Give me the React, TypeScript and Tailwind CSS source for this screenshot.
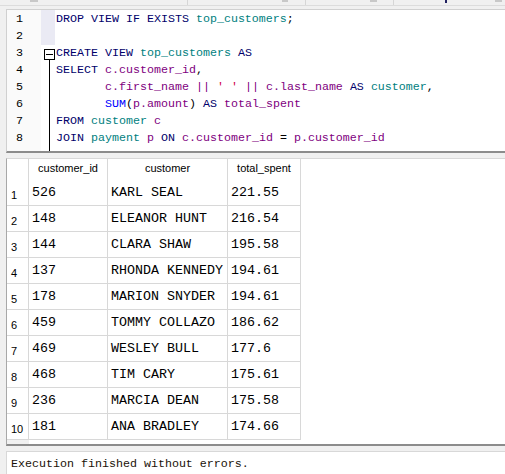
const rows = [
  ["526", "KARL SEAL", "221.55"],
  ["148", "ELEANOR HUNT", "216.54"],
  ["144", "CLARA SHAW", "195.58"],
  ["137", "RHONDA KENNEDY", "194.61"],
  ["178", "MARION SNYDER", "194.61"],
  ["459", "TOMMY COLLAZO", "186.62"],
  ["469", "WESLEY BULL", "177.6"],
  ["468", "TIM CARY", "175.61"],
  ["236", "MARCIA DEAN", "175.58"],
  ["181", "ANA BRADLEY", "174.66"],
];

const mono = { fontFamily: '"Liberation Mono", "Courier New", monospace' };

function Kw({ children }: { children: React.ReactNode }) {
  return <span className="text-[#00006a]">{children}</span>;
}
function Tbl({ children }: { children: React.ReactNode }) {
  return <span className="text-[#008080]">{children}</span>;
}
function Id({ children }: { children: React.ReactNode }) {
  return <span className="text-[#800080]">{children}</span>;
}

export default function App() {
  return (
    <div className="w-[505px] h-[474px] bg-[#f0f0f0] overflow-hidden flex flex-col">
      {/* scrolled-off strip above the editor */}
      <div className="h-[6px] flex border-b border-[#dcdcdc] shrink-0">
        <div className="w-[188px] border-r border-[#d6d6d6] flex">
          <div className="ml-[30px] w-[8px] h-[2px] bg-[#c8c8c8]" />
        </div>
        <div className="w-[118px] border-r border-[#d6d6d6] flex">
          <div className="ml-[94px] w-[6px] h-[2px] bg-[#c8c8c8]" />
        </div>
        <div className="w-[88px] border-r border-[#d6d6d6] flex">
          <div className="ml-[64px] w-[7px] h-[2px] bg-[#c8c8c8]" />
        </div>
        <div className="flex-1 flex">
          <div className="ml-[51px] w-[2px] h-[3px] bg-[#202060]" />
          <div className="ml-[48px] w-[7px] h-[2px] bg-[#c8c8c8]" />
        </div>
      </div>

      {/* SQL editor */}
      <div className="mt-[3px] ml-[6px] h-[144px] shrink-0 bg-white border-l border-t border-[#d0d0d0] border-b-2 border-b-[#8c8c8c] flex">
        <div
          className="w-[34px] bg-[#fafafa] pt-[1px] text-[11.67px] leading-[17px] text-black"
          style={mono}
        >
          {[1, 2, 3, 4, 5, 6, 7, 8].map((n) => (
            <div key={n} className="pl-[9px]">{n}</div>
          ))}
        </div>
        <div className="w-[14px] flex flex-col">
          <div className="h-[35px] bg-[#eaeaf4]" />
          <div className="ml-[3px] mt-[4px] w-[11px] h-[11px] border border-black bg-white flex items-center justify-center">
            <div className="w-[7px] h-px bg-black" />
          </div>
          <div className="ml-[8px] w-px flex-1 bg-black" />
        </div>
        <div
          className="flex-1 pl-px pt-[1px] text-[11.67px] leading-[17px] text-black whitespace-pre"
          style={mono}
        >
          <div><Kw>DROP VIEW IF EXISTS</Kw> <Tbl>top_customers</Tbl>;</div>
          <div>&nbsp;</div>
          <div><Kw>CREATE VIEW</Kw> <Tbl>top_customers</Tbl> <Kw>AS</Kw></div>
          <div><Kw>SELECT</Kw> <Id>c.customer_id</Id>,</div>
          <div>
            {"       "}<Id>c.first_name</Id> <Id>||</Id> <span className="text-[#d0004a]">' '</span> <Id>||</Id> <Id>c.last_name</Id> <Kw>AS</Kw> <Tbl>customer</Tbl>,
          </div>
          <div>
            {"       "}<span className="text-[#0000ff]">SUM</span>(<Id>p.amount</Id>) <Kw>AS</Kw> <Id>total_spent</Id>
          </div>
          <div><Kw>FROM</Kw> <Tbl>customer</Tbl> <Id>c</Id></div>
          <div><Kw>JOIN</Kw> <Tbl>payment</Tbl> <Id>p</Id> <Kw>ON</Kw> <Id>c.customer_id</Id> = <Id>p.customer_id</Id></div>
        </div>
      </div>

      {/* result grid */}
      <div className="mt-[5px] ml-[6px] h-[288px] shrink-0 bg-white border-l border-[#a8a8a8] border-t border-t-[#d8d8d8] border-b-2 border-b-[#8c8c8c] flex flex-col">
        <div
          className="h-[21px] flex text-[11px] text-black"
          style={{ fontFamily: '"Liberation Sans", Arial, sans-serif' }}
        >
          <div className="w-[22px] border-r border-[#d8d8d8]" />
          <div className="w-[79px] border-r border-[#d8d8d8] flex items-center justify-center pb-[2px]">customer_id</div>
          <div className="w-[120px] border-r border-[#d8d8d8] flex items-center justify-center pb-[2px]">customer</div>
          <div className="w-[73px] border-r border-[#d8d8d8] flex items-center justify-center pb-[2px]">total_spent</div>
        </div>
        {rows.map((r, i) => (
          <div key={i} className="h-[26px] flex">
            <div
              className="w-[22px] border-r border-b border-[#d8d8d8] pl-[4px] pt-[8px] text-[11px] leading-[14px] text-black"
              style={{ fontFamily: '"Liberation Sans", Arial, sans-serif' }}
            >
              {i + 1}
            </div>
            {r.map((c, j) => (
              <div
                key={j}
                className={
                  (j === 0 ? "w-[79px]" : j === 1 ? "w-[120px]" : "w-[73px]") +
                  " border-r border-b border-[#d8d8d8] pl-[3px] flex items-center text-[13.33px] text-black whitespace-pre"
                }
                style={mono}
              >
                {c}
              </div>
            ))}
          </div>
        ))}
        <div className="flex-1 flex">
          <div className="w-[22px] bg-[#f0f0f0]" />
        </div>
      </div>

      {/* status */}
      <div className="mt-[5px] ml-[6px] flex-1 bg-white border-l border-t border-[#d8d8d8]">
        <div
          className="pl-[4px] pt-[4px] text-[11.67px] leading-[17px] text-[#1a1208] whitespace-pre"
          style={mono}
        >
          Execution finished without errors.
        </div>
      </div>
    </div>
  );
}
